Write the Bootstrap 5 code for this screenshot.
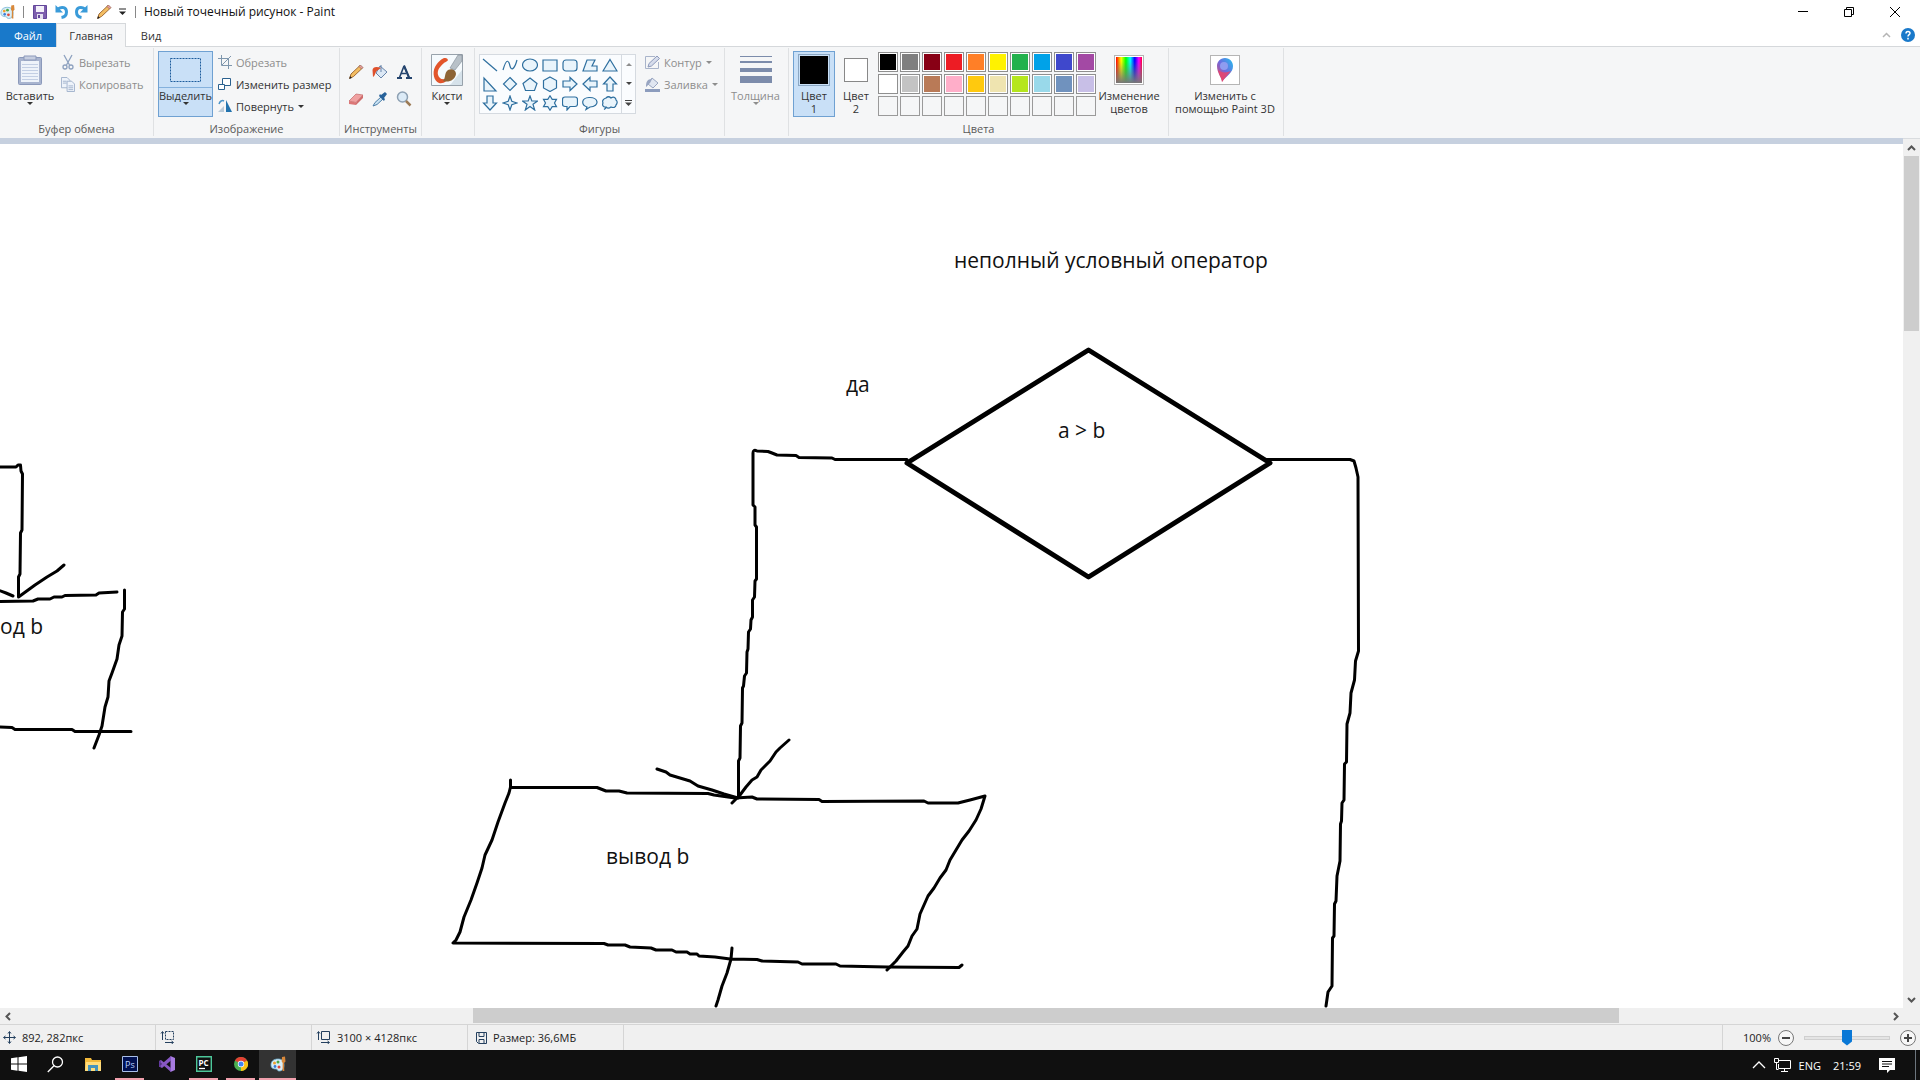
<!DOCTYPE html>
<html lang="ru">
<head>
<meta charset="utf-8">
<meta name="viewport" content="width=device-width, initial-scale=1">
<title>Новый точечный рисунок - Paint</title>
<link href="https://cdn.jsdelivr.net/npm/bootstrap@5.3.0/dist/css/bootstrap.min.css" rel="stylesheet">
<style>
body{font-family:"Open Sans","Noto Sans",sans-serif;font-size:11px;line-height:13px;color:#333;background:#fff;overflow:hidden}
button{font:inherit;color:inherit;background:none;border:1px solid transparent;border-radius:0;padding:0;white-space:nowrap}
svg{display:block;flex:none}
/* title bar */
.titlebar{height:23px;color:#111;font-size:12px;padding-right:2px}
.quick{display:flex;align-items:center;gap:5px;padding:0 8px}
.tb-sep{width:1px;height:12px;background:#888}
.win-btn{width:46px;height:23px}
/* tabs */
.tabstrip{height:24px;border-bottom:1px solid #d5d8db}
.tabstrip a{height:24px;color:#333;text-decoration:none;text-align:center;border:1px solid transparent;border-bottom:0;line-height:23px}
.tabstrip .tab-file{width:56px;background:#1979ca;color:#fff}
.tabstrip .tab-home{width:70px;background:#f5f6f7;border-color:#d5d8db}
.tab-view{width:50px}
/* ribbon */
.ribbon{height:91px;background:#f5f6f7;padding:1px 0 2px}
.group{border-right:1px solid #dfe1e3;display:flex;flex-direction:column;justify-content:space-between}
.group-body{padding-top:3px;display:flex}
.group-label{text-align:center;color:#5a5a5a;line-height:14px}
.big{height:66px;display:flex;flex-direction:column;align-items:center}
.big .pic{height:36px;display:flex;align-items:center;justify-content:center;width:100%;flex:none}
.big .cap{line-height:13px;padding-top:1px}
.big.chosen{background:#c9e0f7;border-color:#6fa1d2}
.split .pic{border-bottom:1px solid #84b1dd}
.tri{width:0;height:0;border:3px solid transparent;border-top-color:currentColor;border-bottom:0;display:inline-block;flex:none}
.tri.up{border-top:0;border-bottom:3px solid currentColor}
.line-btn{display:flex;align-items:center;height:22px;gap:4px}
.off{color:#8d8d8d}
.tools{flex-direction:column;padding:10px 0 0 4px}
.tool{width:24px;height:27px;display:flex;align-items:center;justify-content:center}
.gallery{border:1px solid #d5dae0;background:#fafcfe;width:157px;height:60px;display:flex;margin-top:3px}
.shapes{display:grid;grid-template-columns:repeat(7,20px);grid-template-rows:repeat(3,1fr);flex:1}
.shapes button{display:flex;align-items:center;justify-content:center}
.shapes svg{width:16px;height:16px;fill:#e9f4fb;stroke:#2e6f9f;stroke-width:1.2}
.gal-scroll{width:14px;border-left:1px solid #d5dae0;display:flex;flex-direction:column;color:#444}
.gal-scroll button{flex:1;display:flex;flex-direction:column;align-items:center;justify-content:center;gap:2px}
.palette{display:grid;grid-template-columns:repeat(10,20px);grid-auto-rows:20px;gap:2px;padding:1px 0 0 1px}
.palette button{border:1px solid #9a9a9a;padding:1px}
.palette button.hue{border-color:#8f8f8f;background-color:#fff}
.palette i{display:block;width:100%;height:100%}
.sw-a{width:32px;height:32px;border:1px solid #8ba7c3;padding:1px;background:#c9e0f7}
.sw-a i{display:block;width:100%;height:100%;background:#000}
.sw-b{width:24px;height:24px;border:1px solid #888;background:#fff}
.framed{width:30px;height:30px;border:1px solid #b5b5b5;background:#fff;padding:1px;display:flex;align-items:center;justify-content:center}
.rainbow{width:100%;height:100%;background:linear-gradient(to top,#777,rgba(119,119,119,0) 85%),linear-gradient(to right,red,#ff0 20%,#0f0 38%,#0ff 55%,#00f 72%,#f0f 88%,#f03)}
.w-clip{width:154px}.w-image{width:186px}.w-tools{width:82px}.w-brush{width:53px}.w-shapes{width:250px}.w-size{width:64px}.w-colors{width:380px}.w-3d{width:115px}
.w-brush .group-body,.w-size .group-body,.w-3d .group-body{padding-right:2px}
/* work area */
.work{flex:1;min-height:0;display:flex;background:#f0f0f0}
.sheet{flex:1;min-width:0;border-top:6px solid #c6d0df;background:#fff;overflow:hidden}
.sheet text{font-family:"Open Sans","Noto Sans",sans-serif;font-size:21px;fill:#111}
.vscroll{width:17px;display:flex;flex-direction:column;border-top:1px solid #d9dcdf}
.vscroll button{width:17px;height:17px;display:flex;align-items:center;justify-content:center}
.vthumb{height:175px;width:15px;background:#cdcdcd;margin-left:1px}
.hscroll{height:16px;background:#f0f0f0;display:flex;padding-right:16px}
.hscroll button{height:16px;width:16px;display:flex;align-items:center;justify-content:center}
.htrack{flex:1;padding-left:24%}
.hthumb{height:15px;width:81%;background:#cdcdcd}
/* status bar */
.status{height:26px;background:#f0f0f0;border-top:1px solid #d5d5d5;color:#222}
.stat{width:156px;border-right:1px solid #d5d5d5;display:flex;align-items:center;gap:6px;padding-left:3px;height:25px}
.stat svg{stroke:#24405f;fill:none}
.zoom-box{border-left:1px solid #d5d5d5;padding:0 3px 0 20px}
.zoom-box label{margin-right:6px}
.zoom-slider{appearance:none;-webkit-appearance:none;width:86px;height:18px;background:none;margin:0 9px}
.zoom-slider::-webkit-slider-runnable-track{height:4px;background:#e4e4e4;border:1px solid #cfcfcf}
.zoom-slider::-webkit-slider-thumb{-webkit-appearance:none;width:10px;height:16px;margin-top:-7px;background:#0a78d6;clip-path:polygon(0 0,100% 0,100% 75%,50% 100%,0 75%)}
/* taskbar */
.taskbar{height:30px;background:#101010;color:#fff}
.task{width:37px;height:30px;padding:0 4px;border:0;display:flex;flex-direction:column;align-items:center}
.task span{height:28px;display:flex;align-items:center;justify-content:center;width:100%}
.task.run::after{content:"";height:2px;width:100%;background:#f0a0ad}
.task.now{background:#333;padding:0}
.tray button{height:30px;border:0;display:flex;align-items:center;justify-content:center}
.tray .note{margin:0 20px 0 18px}
.tray .peek{width:5px;border-left:1px solid #6c757d}
</style>
<script src="https://cdn.jsdelivr.net/npm/bootstrap@5.3.0/dist/js/bootstrap.bundle.min.js"></script>
</head>
<body class="d-flex flex-column vh-100">
<svg width="0" height="0" class="position-absolute" aria-hidden="true">
 <defs>
  <symbol id="paint" viewBox="0 0 16 16"><path d="M1 9c0-4 3-6 7-6s6 2 6 6-2 6-5 6c-2 0-1-2-3-2-3 0-5-1-5-4z" fill="#d9eef8" stroke="#6fb2d4" stroke-width=".8"/><circle cx="4.5" cy="7" r="1.5" fill="#f0a030"/><circle cx="8" cy="6" r="1.5" fill="#4aa84a"/><circle cx="5" cy="10.5" r="1.4" fill="#3b7dd8"/><circle cx="9" cy="11" r="1.5" fill="#e04a3a"/><path d="M12 1l3-.5.5 5-1.5 1.5.3 8h-1.800l.2-8-1-1.500z" fill="#d8883a"/></symbol>
  <symbol id="pencil" viewBox="0 0 16 16"><path d="M1.500 14.500l1.500-4.500 9-8.500 2.500 2.500-9 8.500z" fill="#f3bd62" stroke="#96602b" stroke-width=".9"/><path d="M11 2.500l1.500-1.500 2.500 2.500-1.500 1.500z" fill="#e8a0a0" stroke="#8b5a4a" stroke-width=".6"/><path d="M1.300 14.700l.8-2.600 1.800 1.800z" fill="#222"/></symbol>
  <symbol id="curl" viewBox="0 0 14 15"><path d="M1.500 1v7.500H9z" fill="#3a9bd9"/><path d="M4 5c4-3 8.500-1.500 8.500 3 0 3-2 5-5 5.500" fill="none" stroke="#3a9bd9" stroke-width="3"/></symbol>
 </defs>
</svg>

<header class="titlebar d-flex align-items-center">
 <svg width="15" height="16" viewBox="0 0 16 16"><use href="#paint"/></svg>
 <span class="tb-sep ms-2"></span>
 <div class="quick">
  <button aria-label="Сохранить"><svg width="14" height="14" viewBox="0 0 14 14"><path d="M.5.500h13v13h-13z" fill="#7d5fae" stroke="#62469a"/><path d="M3 1h8v6H3z" fill="#f3f0fa"/><path d="M4 9h6v5H4z" fill="#e4e0f0"/><path d="M5 10h2v3H5z" fill="#62469a"/></svg></button>
  <button aria-label="Отменить"><svg width="14" height="15"><use href="#curl"/></svg></button>
  <button aria-label="Вернуть"><svg width="14" height="15"><g transform="matrix(-1 0 0 1 14 0)"><use href="#curl"/></g></svg></button>
  <button aria-label="Карандаш"><svg width="16" height="16"><use href="#pencil"/></svg></button>
  <button aria-label="Настройка панели"><svg width="7" height="8" viewBox="0 0 7 8"><path d="M0 1h7" stroke="#222"/><path d="M0 3.500h7L3.500 7z" fill="#222"/></svg></button>
 </div>
 <span class="tb-sep"></span>
 <span class="ms-2">Новый точечный рисунок - Paint</span>
 <div class="ms-auto d-flex">
  <button class="win-btn d-flex justify-content-center align-items-center" aria-label="Свернуть"><svg width="10" height="10"><path d="M0 4.500h10" stroke="#000"/></svg></button>
  <button class="win-btn d-flex justify-content-center align-items-center" aria-label="Развернуть"><svg width="10" height="10" fill="none" stroke="#000"><path d="M.5 2.500h7v7h-7zM2.500 2.500v-2h7v7h-2"/></svg></button>
  <button class="win-btn d-flex justify-content-center align-items-center" aria-label="Закрыть"><svg width="10" height="10"><path d="M0 0l10 10M10 0L0 10" stroke="#000"/></svg></button>
 </div>
</header>

<nav class="tabstrip d-flex">
 <a class="tab-file" href="#">Файл</a><a class="tab-home" href="#">Главная</a><a class="tab-view" href="#">Вид</a>
 <div class="ms-auto d-flex align-items-center pe-1">
  <button class="me-2" aria-label="Свернуть ленту"><svg width="9" height="6"><path d="M1 5l3.500-3.500L8 5" fill="none" stroke="#b5b5b5" stroke-width="1.500"/></svg></button>
  <button aria-label="Справка"><svg width="14" height="14"><circle cx="7" cy="7" r="7" fill="#1979ca"/><path d="M5 5.500c0-3 4-2.500 4-.3 0 1.500-2 1.500-2 3.300M7 9.800v1.600" fill="none" stroke="#fff" stroke-width="1.500"/></svg></button>
 </div>
</nav>

<main class="ribbon d-flex">
 <section class="group w-clip">
  <div class="group-body">
   <button class="big" style="width:60px"><span class="pic"><svg width="26" height="32" viewBox="0 0 26 32"><rect x="1.500" y="3.500" width="23" height="27" rx="1" fill="#a8b4cf" stroke="#8b99ba"/><path d="M4 7h18v21H4z" fill="#eef3fa"/><path d="M5 10.500h16M5 13.500h16M5 16.500h16M5 19.500h16M5 22.500h16M5 25.500h16" stroke="#c3cfe4"/><path d="M7 2h12v4H7z" fill="#c6cee0" stroke="#8b99ba"/></svg></span><span class="cap">Вставить</span><i class="tri"></i></button>
   <div>
    <button class="line-btn off"><svg width="14" height="16" viewBox="1 0 14 16" fill="none" stroke="#8da1bf" stroke-width="1.300"><path d="M4 1l5.500 10M12 1L6.500 11"/><circle cx="5" cy="13" r="2"/><circle cx="11" cy="13" r="2"/></svg>Вырезать</button>
    <button class="line-btn off"><svg width="14" height="15" viewBox="0 0 15 16" fill="#eef3fa" stroke="#a0b1cb"><path d="M.5.500h6l3 3v8h-9z"/><path d="M6.500 4.500h5l3 3v8h-8z"/><path d="M2 4.500h4M2 6.500h4M8 9.500h5M8 11.500h5M8 13.500h5"/></svg>Копировать</button>
   </div>
  </div>
  <div class="group-label">Буфер обмена</div>
 </section>
 <section class="group w-image">
  <div class="group-body ps-1">
   <button class="big chosen split" style="width:55px"><span class="pic"><svg width="31" height="24"><path d="M.5.500h30v23H.5z" fill="none" stroke="#1c5c9c" stroke-dasharray="2 1"/></svg></span><span class="cap">Выделить</span><i class="tri"></i></button>
   <div class="ps-1">
    <button class="line-btn off"><svg width="14" height="14" fill="none" stroke="#7f97ad"><path d="M3.500 0v10.500H14M0 3.500h10.500V14M4 10L13 1"/></svg>Обрезать</button>
    <button class="line-btn"><svg width="14" height="14" fill="#fff" stroke="#2b618e"><path d="M4.500 1.500h8v7h-8z"/><path d="M.5 7.500h6v5h-6z"/></svg>Изменить размер</button>
    <button class="line-btn"><svg width="14" height="14"><path d="M8 1v12h6z" fill="#2273ae"/><path d="M6 7v6H0z" fill="#b9cad8"/><path d="M1 5c1-3 3-4 5-3" fill="none" stroke="#4b95c9" stroke-width="1.500"/></svg>Повернуть<i class="tri"></i></button>
   </div>
  </div>
  <div class="group-label">Изображение</div>
 </section>
 <section class="group w-tools">
  <div class="group-body tools">
   <div class="d-flex">
    <button class="tool" aria-label="Карандаш"><svg width="16" height="16"><use href="#pencil"/></svg></button>
    <button class="tool" aria-label="Заливка цветом"><svg width="16" height="16"><path d="M8 2l7 6-6 6-5-5z" fill="#dce8f5" stroke="#6784aa"/><path d="M9 1v7" stroke="#6784aa"/><path d="M9 4C4 2 1 3 .5 6L1 13c2-1 2-4 3.500-6z" fill="#df512c"/></svg></button>
    <button class="tool" aria-label="Текст"><svg width="16" height="16"><path d="M8 2l5 11.500M8 2L3.500 13.500M5 9.500h5" stroke="#24446e" stroke-width="1.600" fill="none"/><path d="M8 1.500l5 12M1 14h5M10 14h6" stroke="#24446e" stroke-width="2"/></svg></button>
   </div>
   <div class="d-flex">
    <button class="tool" aria-label="Ластик"><svg width="16" height="16"><path d="M1 10l7-7 7 1-7 7.500z" fill="#f0a1a1" stroke="#c16a6a" stroke-width=".7"/><path d="M1 10l7 1.500V14l-7-1z" fill="#dc7777"/><path d="M8 11.500L15 4v3l-7 7z" fill="#cf6b6b"/></svg></button>
    <button class="tool" aria-label="Палитра"><svg width="16" height="16"><path d="M1 15l2-3.500L9 6l2 2-6 5.500z" fill="#c9e2f3" stroke="#4d7fa8"/><path d="M7 5l5 5 1-2-1-1 3-4-2-2-4 3-1-1z" fill="#27629a"/></svg></button>
    <button class="tool" aria-label="Масштаб"><svg width="16" height="16"><circle cx="6.500" cy="6" r="5" fill="#dcebf7" stroke="#8da0b3" stroke-width="1.500"/><path d="M10 10l4.500 4.500" stroke="#9c7b56" stroke-width="2.500"/></svg></button>
   </div>
  </div>
  <div class="group-label">Инструменты</div>
 </section>
 <section class="group w-brush">
  <div class="group-body">
   <button class="big w-100"><span class="pic"><svg width="32" height="32"><path d="M.5.500h31v31H.5z" fill="#f5fafd" stroke="#98a2ab"/><path d="M20 30l11-14v15H18z" fill="#d6e2ea"/><path d="M13 4C9 6 7 8 4 13c-3 6-1 14 4 16 5 1 8-2 9-5-3 1-6 2-8 0-4-4-2-9 1-12 3-4 6-4 7-6-1-2-2-2-4-2z" fill="#e2552b"/><path d="M12 27c3-3 1-8 5-11 4-2 8 0 8 4-1 6-7 9-13 7z" fill="#8d6436"/><path d="M19 14L27 1h4v6l-7 9z" fill="#b8c1c8" stroke="#7f8a93" stroke-width=".6"/></svg></span><span class="cap">Кисти</span><i class="tri"></i></button>
  </div>
 </section>
 <section class="group w-shapes">
  <div class="group-body ps-1">
   <div class="gallery">
    <div class="shapes">
     <button aria-label="Линия"><svg><path d="M1 2l14 12"/></svg></button>
     <button aria-label="Кривая"><svg><path d="M1 13C5-1 7 5 8 9s4 5 7-6" fill="none"/></svg></button>
     <button aria-label="Овал"><svg><ellipse cx="8" cy="8" rx="7.500" ry="6"/></svg></button>
     <button aria-label="Прямоугольник"><svg><path d="M1 3h14v11H1z"/></svg></button>
     <button aria-label="Скругленный прямоугольник"><svg><rect x="1" y="3" width="14" height="11" rx="3"/></svg></button>
     <button aria-label="Многоугольник"><svg><path d="M1 14L5 3h8l-3 6h5v5z"/></svg></button>
     <button aria-label="Треугольник"><svg><path d="M8 2.500l7 11.500H1z"/></svg></button>
     <button aria-label="Прямоугольный треугольник"><svg><path d="M2 2v13h12z"/></svg></button>
     <button aria-label="Ромб"><svg><path d="M8 1.500l6.500 6.500L8 14.500 1.500 8z"/></svg></button>
     <button aria-label="Пятиугольник"><svg><path d="M8 2l7 5.500-2.500 7h-9L1 7.500z"/></svg></button>
     <button aria-label="Шестиугольник"><svg><path d="M8 1l6.500 3.500v7.500L8 15.500 1.500 12V4.500z"/></svg></button>
     <button aria-label="Стрелка вправо"><svg><path d="M1 5h7V1.500L15 8l-7 6.500V11H1z"/></svg></button>
     <button aria-label="Стрелка влево"><svg><path d="M15 5H8V1.500L1 8l7 6.500V11h7z"/></svg></button>
     <button aria-label="Стрелка вверх"><svg><path d="M5 15V8H1.500L8 1l6.500 7H11v7z"/></svg></button>
     <button aria-label="Стрелка вниз"><svg><path d="M5 1v7H1.500L8 15l6.500-7H11V1z"/></svg></button>
     <button aria-label="Четырехконечная звезда"><svg><path d="M8 1l1.800 5.200L15 8l-5.200 1.800L8 15 6.200 9.800 1 8l5.200-1.800z"/></svg></button>
     <button aria-label="Пятиконечная звезда"><svg><path d="M8 1l1.800 5h5.700L11 9.300l1.700 5.700L8 11.500 3.300 15 5 9.300.5 6h5.700z"/></svg></button>
     <button aria-label="Шестиконечная звезда"><svg><path d="M8 .8l2.200 3.500h4.300L12.500 8l2 3.700h-4.300L8 15.200l-2.200-3.500H1.500L3.500 8l-2-3.700h4.300z"/></svg></button>
     <button aria-label="Выноска"><svg><path d="M3 2h10q2.500 0 2.500 2.500V9q0 2.500-2.500 2.500H8L5 15v-3.500H3Q.5 11.500.5 9V4.500Q.5 2 3 2z"/></svg></button>
     <button aria-label="Овальная выноска"><svg><path d="M5 12C-1 10-1 3 7 2.500c10-.5 11 9 1 9.500L4 14.500z"/></svg></button>
     <button aria-label="Выноска-облако"><svg><path d="M4 3c2-2 4-1 5 0 2-1.500 5-1 5 2 2 1.500 1 4 0 5 0 2.500-3 3-5 2-2 1.500-4 1-5 0-3 .5-4-2-3-4-1-2 0-4 3-5zM4 13l-2 1.500"/></svg></button>
    </div>
    <div class="gal-scroll"><button class="off" aria-label="Вверх"><i class="tri up"></i></button><button aria-label="Вниз"><i class="tri"></i></button><button aria-label="Все фигуры"><svg width="7" height="6"><path d="M0 .5h7" stroke="#444"/><path d="M0 2.500h7L3.500 6z" fill="#444"/></svg></button></div>
   </div>
   <div class="ps-1 ms-1">
    <button class="line-btn off"><svg width="15" height="15"><path d="M13.500 7v6.500H.5V1.500H10" fill="none" stroke="#a9b4ca"/><path d="M3 12l1-3.500 8-7.500 2.500 2.500-8 7.500z" fill="#d6dceb" stroke="#8c99ba"/></svg>Контур<i class="tri"></i></button>
    <button class="line-btn off"><svg width="15" height="15"><path d="M0 12h16v3H0z" fill="#8c9cbd"/><path d="M7 1l6 5-5 5-5-4z" fill="#e0e6f1" stroke="#98a5c1"/><path d="M7 2C2 2 1 5 1 10c2-1 2-3 4-4z" fill="#98a5c1"/></svg>Заливка<i class="tri"></i></button>
   </div>
  </div>
  <div class="group-label">Фигуры</div>
 </section>
 <section class="group w-size">
  <div class="group-body">
   <button class="big w-100 off"><span class="pic"><svg width="32" height="28"><path d="M0 0h32v1H0zM0 5h32v2H0zM0 12h32v4H0zM0 20h32v7H0z" fill="#7c8cab"/></svg></span><span class="cap">Толщина</span><i class="tri"></i></button>
  </div>
 </section>
 <section class="group w-colors">
  <div class="group-body ps-1">
   <button class="big chosen" style="width:42px"><span class="pic"><span class="sw-a"><i></i></span></span><span class="cap">Цвет<br>1</span></button>
   <button class="big" style="width:42px"><span class="pic"><span class="sw-b"></span></span><span class="cap">Цвет<br>2</span></button>
   <div class="palette">
    <button class="hue" aria-label="Черный"><i style="background:#000"></i></button><button class="hue" aria-label="Серый-50%"><i style="background:#7f7f7f"></i></button><button class="hue" aria-label="Темно-красный"><i style="background:#880015"></i></button><button class="hue" aria-label="Красный"><i style="background:#ed1c24"></i></button><button class="hue" aria-label="Оранжевый"><i style="background:#ff7f27"></i></button><button class="hue" aria-label="Желтый"><i style="background:#fff200"></i></button><button class="hue" aria-label="Зеленый"><i style="background:#22b14c"></i></button><button class="hue" aria-label="Бирюзовый"><i style="background:#00a2e8"></i></button><button class="hue" aria-label="Индиго"><i style="background:#3f48cc"></i></button><button class="hue" aria-label="Фиолетовый"><i style="background:#a349a4"></i></button>
    <button class="hue" aria-label="Белый"><i style="background:#fff"></i></button><button class="hue" aria-label="Серый-25%"><i style="background:#c3c3c3"></i></button><button class="hue" aria-label="Коричневый"><i style="background:#b97a57"></i></button><button class="hue" aria-label="Розовый"><i style="background:#ffaec9"></i></button><button class="hue" aria-label="Золотой"><i style="background:#ffc90e"></i></button><button class="hue" aria-label="Светло-желтый"><i style="background:#efe4b0"></i></button><button class="hue" aria-label="Травяной"><i style="background:#b5e61d"></i></button><button class="hue" aria-label="Голубой"><i style="background:#99d9ea"></i></button><button class="hue" aria-label="Сизый"><i style="background:#7092be"></i></button><button class="hue" aria-label="Сиреневый"><i style="background:#c8bfe7"></i></button>
    <button aria-label="Пусто 1"></button><button aria-label="Пусто 2"></button><button aria-label="Пусто 3"></button><button aria-label="Пусто 4"></button><button aria-label="Пусто 5"></button><button aria-label="Пусто 6"></button><button aria-label="Пусто 7"></button><button aria-label="Пусто 8"></button><button aria-label="Пусто 9"></button><button aria-label="Пусто 10"></button>
   </div>
   <button class="big" style="width:66px"><span class="pic"><span class="framed"><span class="rainbow"></span></span></span><span class="cap">Изменение<br>цветов</span></button>
  </div>
  <div class="group-label">Цвета</div>
 </section>
 <section class="group w-3d">
  <div class="group-body">
   <button class="big w-100"><span class="pic"><span class="framed"><svg width="20" height="26"><defs><linearGradient id="drop" x1="1" y1="0" x2="0" y2="1"><stop offset="0" stop-color="#22c3ee"/><stop offset=".5" stop-color="#6b6be0"/><stop offset="1" stop-color="#f0405a"/></linearGradient></defs><path d="M10 1c5 0 8 4 8 8 0 7-6 9-11 16 0-4-5-9-5-16 0-4 3-8 8-8z" fill="url(#drop)"/><path d="M3 13c4 3 8 3 13 1-3 4-7 7-9 11 0-4-3-7-4-12z" fill="#ee4268" opacity=".8"/><circle cx="9" cy="9" r="4" fill="#8f9cf0"/></svg></span></span><span class="cap">Изменить с<br>помощью Paint 3D</span></button>
  </div>
 </section>
</main>

<div class="work">
 <div class="sheet">
  <svg width="1903" height="864" viewBox="0 144 1903 864" fill="none" stroke="#000" stroke-width="3" stroke-linecap="round" stroke-linejoin="round">
   <path d="M1088.500 350L1270 463 1088.500 577 907 463z" stroke-width="5"/>
   <path d="M907 459.500H835L832 458 799 457.500 796 455.500 777 455 772 453 768 451.500 757 451Q753 449 753 453V505L755 507V525L756.500 527V579L755 581 754.500 597 752.500 600V617L751 620 750.500 629 748.500 632 748 649 747 652 746.500 673 744.500 676 743.500 686 742.500 688 742 723 740.500 726 740 758 738.500 761V797"/>
   <path d="M657 769L666 772 670 775 680 778 690 781 698 786 712 790 724 794 738 798M789 740L780 748 776 752 770 761 761 770 757 777 752 780 746 787 740 795 732 803"/>
   <path d="M1266 459.500H1350L1354 461 1356 468 1358 477 1358.500 651 1355.500 661 1354.500 680 1351 693 1350 713 1347 724 1346.500 762 1344.500 764 1344 800 1342 803 1341.500 821 1340.500 824 1340 861 1337 876 1336 901 1334.500 904 1334 936 1332.500 938 1332 986 1328 992 1326 1006"/>
   <path d="M510.500 780V787.500H597L606 791H619L627 793 708 793.500 714 795 735 798 752 797 757 799 819 799.500 822 801.500 924 801 928 803H958L970 800 985 796 981 809 976 820 969 831 962 840 956 850 950 860 946 870 940 878 934 888 928 896 924 905 920 914 917 929 912 936 908 946 903 952 896 961 887 970"/>
   <path d="M510.500 787L509 793 505 803 498 822 492 840 485 855 482 868 477 883 471 900 464 917 460 932 456 940 453 943 604 943.500 608 945H625L630 947 651 948 656 950H672L676 952H687L690 954H697L699 956 715 957 730 959 757 959.500 762 961 798 962 802 964H836L840 966 887 967 959 967.500 962 965M732 948L731 959 727 973 722 986 718 1000 716 1006"/>
   <path d="M-2 467H16L18 465H20.500L21 471 22.500 474 22 530 20.500 533 20 574 18.500 577V597L35 585 47 577 57 571 64 565M-2 590L6 593 13 596M-2 601.500L33 601 38 599H50L54 597H62L65 595.500 96 595 99 593 117 592M124.500 590V609L122.500 612 122 636 119 645 117 659 112 673 109 681 108 697 105 707 102 726 99 735 94 748M-2 727L12 727.500 15 729.500H72L75 731.500H131"/>
   <g stroke="none"><text x="954" y="268">неполный условный оператор</text><text x="846" y="392">да</text><text x="1058" y="438">a &gt; b</text><text x="606" y="864">вывод b</text><text x="0" y="634">од b</text></g>
  </svg>
 </div>
 <div class="vscroll">
  <button aria-label="Прокрутить вверх"><svg width="9" height="6"><path d="M1 5l3.500-3.500L8 5" fill="none" stroke="#555" stroke-width="2"/></svg></button>
  <div class="vthumb"></div>
  <button class="mt-auto" aria-label="Прокрутить вниз"><svg width="9" height="6"><path d="M1 1l3.500 3.500L8 1" fill="none" stroke="#555" stroke-width="2"/></svg></button>
 </div>
</div>
<div class="hscroll">
 <button aria-label="Прокрутить влево"><svg width="6" height="9"><path d="M5 1L1.500 4.500 5 8" fill="none" stroke="#555" stroke-width="2"/></svg></button>
 <div class="htrack"><div class="hthumb"></div></div>
 <button aria-label="Прокрутить вправо"><svg width="6" height="9"><path d="M1 1l3.500 3.500L1 8" fill="none" stroke="#555" stroke-width="2"/></svg></button>
</div>

<footer class="status d-flex align-items-center">
 <div class="stat"><svg width="13" height="13"><path d="M6.500 1v11M1 6.500h11M5 2.500l1.500-2 1.500 2M5 10.500l1.500 2 1.500-2M2.500 5l-2 1.500 2 1.500M10.500 5l2 1.500-2 1.500"/></svg>892, 282пкс</div>
 <div class="stat ps-1"><svg width="15" height="13"><path d="M5.500.500h8v8h-8z" stroke-dasharray="2 1"/><path d="M2.500 9V1M1 2.500l1.500-2 1.500 2M5 11.500h8M11.500 10l2 1.500-2 1.500"/></svg></div>
 <div class="stat ps-1"><svg width="15" height="13"><path d="M5.500.500h8v8h-8z"/><path d="M2.500 9V1M1 2.500l1.500-2 1.500 2M5 11.500h8M11.500 10l2 1.500-2 1.500"/></svg>3100 × 4128пкс</div>
 <div class="stat ps-2"><svg width="11" height="12"><path d="M.5.500h10v11h-8l-2-2zM3 .5v4h5v-4M3 11V7.500h5V11"/></svg>Размер: 36,6МБ</div>
 <div class="zoom-box ms-auto d-flex align-items-center h-100">
  <label for="zoom">100%</label>
  <button aria-label="Уменьшить"><svg width="16" height="16"><circle cx="8" cy="8" r="7.500" fill="#f7f7f7" stroke="#777"/><path d="M4 8h8" stroke="#444" stroke-width="2"/></svg></button>
  <input class="zoom-slider" id="zoom" type="range" min="0" max="100" value="50">
  <button aria-label="Увеличить"><svg width="16" height="16"><circle cx="8" cy="8" r="7.500" fill="#f7f7f7" stroke="#777"/><path d="M4 8h8M8 4v8" stroke="#444" stroke-width="2"/></svg></button>
 </div>
</footer>

<div class="taskbar d-flex">
 <button class="task" aria-label="Пуск"><span><svg width="16" height="16" fill="#fff"><path d="M0 2.200L6.500 1.300V7.500H0zM7.500 1.200L16 0v7.500H7.500zM0 8.500h6.500v6.200L0 13.800zM7.500 8.500H16V16l-8.500-1.200z"/></svg></span></button>
 <button class="task" aria-label="Поиск"><span><svg width="17" height="17" fill="none" stroke="#fff" stroke-width="1.300"><circle cx="10.500" cy="6" r="5"/><path d="M7 9.800L.8 16"/></svg></span></button>
 <button class="task" aria-label="Проводник"><span><svg width="16" height="15"><path d="M0 1h6l1 2h9v11H0z" fill="#f2b93b"/><path d="M1 5h15v9H0z" fill="#ffdc7c"/><path d="M3 14V8h10v6h-3v-3H6v3z" fill="#4593bd"/></svg></span></button>
 <button class="task run" aria-label="Photoshop"><span><svg width="16" height="16"><path d="M.5.500h15v15H.5z" fill="#001051" stroke="#a8bfe8"/><text x="3" y="11.500" font-size="9" font-family="Open Sans" fill="#b9d2ff">Ps</text></svg></span></button>
 <button class="task" aria-label="Visual Studio"><span><svg width="16" height="16"><path d="M11.500 0L16 2v12l-4.500 2z" fill="#a77be0"/><path d="M12 0v4.500L3 12l-2-1V9.500zM0 5l2-1 10 8v4L0 5.500z" fill="#8757c4"/><path d="M0 5h1.800v6H0z" fill="#63399f"/></svg></span></button>
 <button class="task run" aria-label="PyCharm"><span><svg width="16" height="16"><path d="M.7.700h14.600v14.600H.7z" fill="#101010" stroke="#4dc79a" stroke-width="1.400"/><text x="2.500" y="9.500" font-size="8" font-weight="700" font-family="Open Sans" fill="#fff">PC</text><path d="M3 12.500h6" stroke="#fff" stroke-width="1.300"/></svg></span></button>
 <button class="task run" aria-label="Chrome"><span><svg width="14" height="14"><circle cx="7" cy="7" r="7" fill="#4caf50"/><path d="M7 7L.9 3.500A7 7 0 0 1 13.100 3.500z" fill="#e34133"/><path d="M7 7l6.100-3.500A7 7 0 0 1 7 14z" fill="#fbc116"/><circle cx="7" cy="7" r="3.200" fill="#fff"/><circle cx="7" cy="7" r="2.500" fill="#4285f4"/></svg></span></button>
 <button class="task run now" aria-label="Paint"><span><svg width="16" height="16"><use href="#paint"/></svg></span></button>
 <div class="tray ms-auto d-flex">
  <button class="me-2" aria-label="Скрытые значки"><svg width="14" height="8"><path d="M1 7l6-6 6 6" fill="none" stroke="#fff" stroke-width="1.300"/></svg></button>
  <button aria-label="Сеть"><svg width="17" height="14" fill="none" stroke="#fff"><path d="M5 2.500h11.500v8H4.500V6M10.500 10.500v3M7 13.500h7M.5.500h4v4h-4zM2.500 4.500v7h2"/></svg></button>
  <button class="ms-2">ENG</button>
  <button class="ms-2 ps-1">21:59</button>
  <button class="note" aria-label="Уведомления"><svg width="16" height="16"><path d="M0 1h16v12h-5l-3 3v-3H0z" fill="#fff"/><path d="M3 4.500h10M3 7h10M3 9.500h7" stroke="#101010"/></svg></button>
  <button class="peek" aria-label="Показать рабочий стол"></button>
 </div>
</div>
</body>
</html>
